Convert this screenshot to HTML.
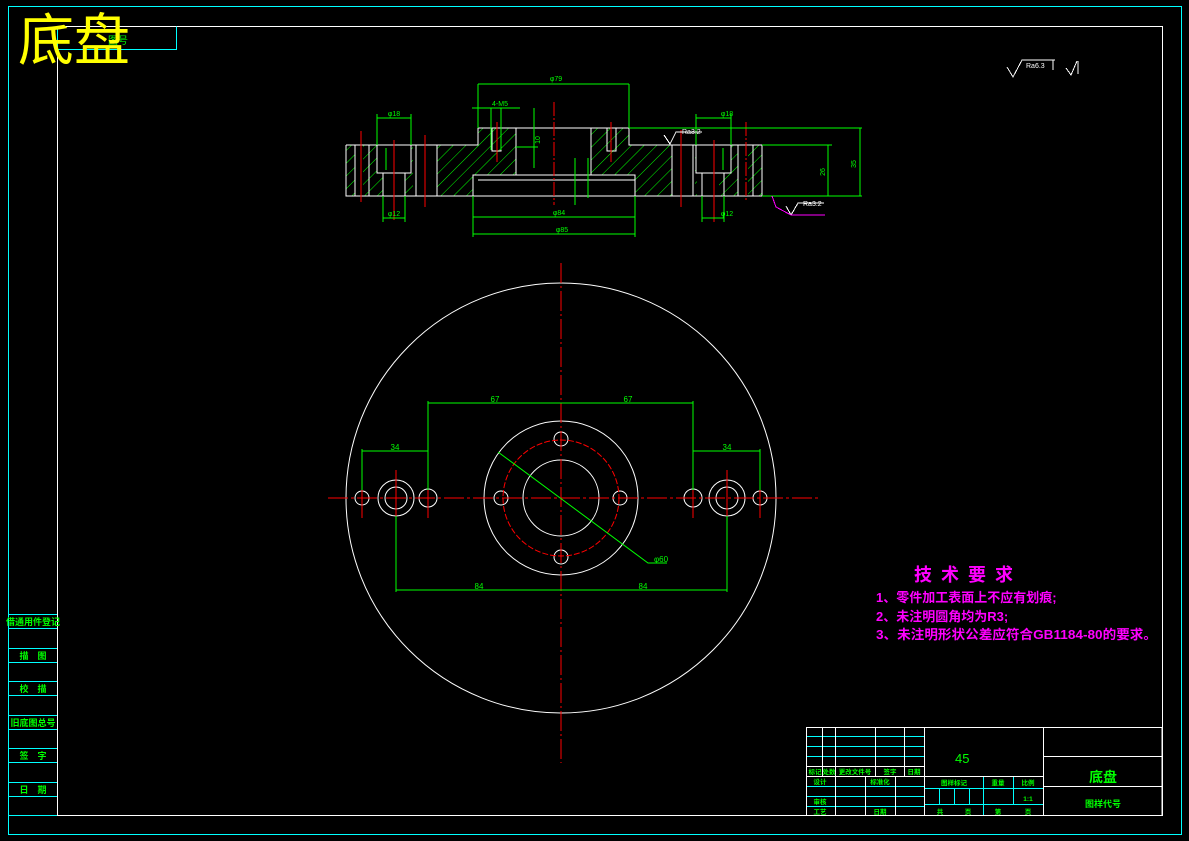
<!DOCTYPE html>
<html><head><meta charset="utf-8"><style>
html,body{margin:0;padding:0;background:#000;}
svg{display:block;}
text{font-family:"Liberation Sans","Noto Sans CJK SC",sans-serif;}
</style></head><body>
<svg width="1189" height="841" viewBox="0 0 1189 841" xmlns="http://www.w3.org/2000/svg" shape-rendering="crispEdges">
<defs>
<pattern id="h" patternUnits="userSpaceOnUse" width="9" height="9" patternTransform="rotate(45)">
<line x1="0" y1="0" x2="0" y2="9" stroke="#00ff00" stroke-width="1"/>
</pattern>
</defs>
<rect width="1189" height="841" fill="#000"/>
<rect x="8.5" y="6.5" width="1173" height="828" fill="none" stroke="#00ffff"/>
<rect x="57.5" y="26.5" width="1105" height="789" fill="none" stroke="#fff"/>
<polyline points="57.5,26.5 57.5,49.5 176.5,49.5 176.5,26.5" fill="none" stroke="#00ffff"/>
<text x="108" y="44" font-size="10" fill="#00ff00">图号</text>
<text x="18" y="60" font-size="56" fill="#ffff00" font-family="Noto Sans CJK SC,sans-serif">底盘</text>

<g stroke="#00ffff">
<line x1="8" y1="614.5" x2="57" y2="614.5"/><line x1="8" y1="628.5" x2="57" y2="628.5"/>
<line x1="8" y1="648.5" x2="57" y2="648.5"/><line x1="8" y1="662.5" x2="57" y2="662.5"/>
<line x1="8" y1="681.5" x2="57" y2="681.5"/><line x1="8" y1="695.5" x2="57" y2="695.5"/>
<line x1="8" y1="715.5" x2="57" y2="715.5"/><line x1="8" y1="729.5" x2="57" y2="729.5"/>
<line x1="8" y1="748.5" x2="57" y2="748.5"/><line x1="8" y1="762.5" x2="57" y2="762.5"/>
<line x1="8" y1="782.5" x2="57" y2="782.5"/><line x1="8" y1="796.5" x2="57" y2="796.5"/>
<line x1="8" y1="815.5" x2="57" y2="815.5"/>
</g>
<g fill="#00ff00" font-size="9" font-weight="bold" text-anchor="middle">
<text x="33" y="625">借通用件登记</text>
<text x="33" y="659">描　图</text>
<text x="33" y="692">校　描</text>
<text x="33" y="726">旧底图总号</text>
<text x="33" y="759">签　字</text>
<text x="33" y="793">日　期</text>
</g>

<g stroke="#fff" fill="none">
<polyline points="1007,67 1013,77 1022,60 1055,60"/><line x1="1053" y1="60" x2="1053" y2="70"/>
<polyline points="1066,68 1071,75 1077,61"/><line x1="1078" y1="61" x2="1078" y2="74"/>
</g>
<text x="1026" y="68" font-size="7" fill="#fff">Ra6.3</text>

<g>
<rect x="346" y="145" width="91" height="51" fill="url(#h)"/>
<rect x="437" y="128" width="79" height="68" fill="url(#h)"/>
<rect x="591" y="128" width="81" height="68" fill="url(#h)"/>
<rect x="672" y="145" width="90" height="51" fill="url(#h)"/>
<rect x="437" y="120" width="41" height="25" fill="#000"/>
<rect x="629" y="120" width="43" height="25" fill="#000"/>
<rect x="473" y="175" width="162" height="21" fill="#000"/>
<rect x="516" y="128" width="75" height="47" fill="#000"/>
<rect x="377" y="145" width="34" height="28" fill="#000"/>
<rect x="383" y="173" width="22" height="23" fill="#000"/>
<rect x="413" y="145" width="24" height="51" fill="#000"/>
<rect x="697" y="173" width="22" height="23" fill="#000"/>
<rect x="696" y="145" width="35" height="28" fill="#000"/>
<rect x="672" y="145" width="23" height="51" fill="#000"/>
<rect x="738" y="145" width="10" height="51" fill="#000"/>
<rect x="355" y="145" width="8" height="51" fill="#000"/>
</g>
<g stroke="#fff" fill="none">
<polyline points="346,145 478,145 478,128 629,128 629,145 762,145 762,196 346,196 346,145"/>
<rect x="473" y="175" width="162" height="21"/>
<line x1="478" y1="180" x2="635" y2="180"/>
<line x1="516" y1="128" x2="516" y2="175"/><line x1="591" y1="128" x2="591" y2="175"/>
<rect x="377" y="145" width="34" height="28"/><rect x="383" y="173" width="22" height="23"/>
<rect x="696" y="145" width="35" height="28"/><rect x="702" y="173" width="22" height="23"/>
<line x1="355" y1="145" x2="355" y2="196"/><line x1="369" y1="145" x2="369" y2="196"/>
<line x1="437" y1="145" x2="437" y2="196"/><line x1="416" y1="145" x2="416" y2="196"/>
<line x1="672" y1="145" x2="672" y2="196"/><line x1="693" y1="145" x2="693" y2="196"/>
<line x1="738" y1="145" x2="738" y2="196"/><line x1="753" y1="145" x2="753" y2="196"/>
<rect x="492" y="128" width="9" height="23"/><rect x="607" y="128" width="9" height="23"/>
</g>
<g stroke="#ff0000">
<line x1="361" y1="131" x2="361" y2="202"/><line x1="394" y1="140" x2="394" y2="220"/>
<line x1="425" y1="135" x2="425" y2="207"/><line x1="497" y1="122" x2="497" y2="162"/>
<line x1="554" y1="102" x2="554" y2="205" stroke-dasharray="14,2,2,2"/>
<line x1="611" y1="122" x2="611" y2="162"/><line x1="681" y1="130" x2="681" y2="207"/>
<line x1="714" y1="140" x2="714" y2="222"/><line x1="746" y1="122" x2="746" y2="200" stroke-dasharray="14,2,2,2"/>
</g>
<g stroke="#00ff00" fill="none">
<line x1="478" y1="84" x2="629" y2="84"/><line x1="478" y1="84" x2="478" y2="128"/><line x1="629" y1="84" x2="629" y2="128"/>
<line x1="472" y1="108" x2="520" y2="108"/><line x1="491" y1="108" x2="491" y2="150"/><line x1="501" y1="108" x2="501" y2="150"/>
<line x1="377" y1="118" x2="411" y2="118"/><line x1="377" y1="114" x2="377" y2="145"/><line x1="411" y1="114" x2="411" y2="145"/>
<line x1="383" y1="218" x2="405" y2="218"/><line x1="383" y1="196" x2="383" y2="222"/><line x1="405" y1="196" x2="405" y2="222"/>
<line x1="696" y1="118" x2="731" y2="118"/><line x1="696" y1="114" x2="696" y2="145"/><line x1="731" y1="114" x2="731" y2="145"/>
<line x1="702" y1="218" x2="724" y2="218"/><line x1="702" y1="196" x2="702" y2="222"/><line x1="724" y1="196" x2="724" y2="222"/>
<line x1="473" y1="217" x2="635" y2="217"/><line x1="473" y1="234" x2="635" y2="234"/>
<line x1="473" y1="196" x2="473" y2="237"/><line x1="635" y1="196" x2="635" y2="237"/>
<line x1="629" y1="128" x2="862" y2="128"/><line x1="762" y1="196" x2="862" y2="196"/><line x1="762" y1="145" x2="832" y2="145"/>
<line x1="860" y1="128" x2="860" y2="196"/><line x1="828" y1="145" x2="828" y2="196"/>
<line x1="534" y1="108" x2="534" y2="168"/><line x1="516" y1="147" x2="538" y2="147"/>
<line x1="575" y1="158" x2="575" y2="205"/><line x1="588" y1="158" x2="588" y2="198"/>
<line x1="386" y1="148" x2="386" y2="170"/><line x1="723" y1="148" x2="723" y2="170"/>
</g>
<g fill="#00ff00" font-size="7" text-anchor="middle">
<text x="556" y="81">φ79</text><text x="500" y="106">4-M5</text>
<text x="394" y="116">φ18</text><text x="394" y="216">φ12</text>
<text x="727" y="116">φ18</text><text x="727" y="216">φ12</text>
<text x="559" y="215">φ84</text><text x="562" y="232">φ85</text>
<text x="856" y="164" transform="rotate(-90 856 164)">35</text>
<text x="825" y="172" transform="rotate(-90 825 172)">26</text>
<text x="540" y="140" transform="rotate(-90 540 140)">10</text>
</g>
<g stroke="#fff" fill="none">
<polyline points="664,135 670,144 676,132 702,132"/><polyline points="786,206 791,215 798,203 824,203"/>
</g>
<polyline points="772,196 776,207 791,215" stroke="#ff00ff" fill="none"/>
<line x1="791" y1="215" x2="825" y2="215" stroke="#ff00ff"/>
<g fill="#fff" font-size="7"><text x="682" y="134">Ra3.2</text><text x="803" y="206">Ra3.2</text></g>

<g stroke="#fff" fill="none" shape-rendering="auto">
<circle cx="561" cy="498" r="215"/>
<circle cx="561" cy="498" r="77"/>
<circle cx="561" cy="498" r="38"/>
<circle cx="561" cy="439" r="7"/><circle cx="561" cy="557" r="7"/>
<circle cx="501" cy="498" r="7"/><circle cx="620" cy="498" r="7"/>
<circle cx="362" cy="498" r="7"/><circle cx="396" cy="498" r="18"/><circle cx="396" cy="498" r="11"/>
<circle cx="428" cy="498" r="9"/><circle cx="693" cy="498" r="9"/>
<circle cx="727" cy="498" r="18"/><circle cx="727" cy="498" r="11"/><circle cx="760" cy="498" r="7"/>
</g>
<circle cx="561" cy="498" r="58" stroke="#ff0000" fill="none" stroke-dasharray="6,2" shape-rendering="auto"/>
<g stroke="#ff0000">
<line x1="328" y1="498" x2="818" y2="498" stroke-dasharray="20,3,3,3"/>
<line x1="561" y1="263" x2="561" y2="763" stroke-dasharray="20,3,2,3"/>
<line x1="396" y1="470" x2="396" y2="526"/><line x1="727" y1="470" x2="727" y2="526"/>
<line x1="362" y1="478" x2="362" y2="518"/><line x1="760" y1="478" x2="760" y2="518"/>
<line x1="428" y1="478" x2="428" y2="518"/><line x1="693" y1="478" x2="693" y2="518"/>
</g>
<g stroke="#00ff00" fill="none">
<line x1="428" y1="403" x2="693" y2="403"/>
<line x1="428" y1="401" x2="428" y2="490"/><line x1="693" y1="401" x2="693" y2="490"/>
<line x1="362" y1="451" x2="428" y2="451"/><line x1="693" y1="451" x2="760" y2="451"/>
<line x1="362" y1="449" x2="362" y2="490"/><line x1="760" y1="449" x2="760" y2="490"/>
<line x1="396" y1="590" x2="727" y2="590"/>
<line x1="396" y1="516" x2="396" y2="592"/><line x1="727" y1="516" x2="727" y2="592"/>
<polyline points="498,452 648,563 667,563" shape-rendering="auto"/>
</g>
<g fill="#00ff00" font-size="8" text-anchor="middle">
<text x="495" y="402">67</text><text x="628" y="402">67</text>
<text x="395" y="450">34</text><text x="727" y="450">34</text>
<text x="479" y="589">84</text><text x="643" y="589">84</text>
<text x="661" y="562">φ60</text>
</g>

<g fill="#ff00ff" font-family="Noto Serif CJK SC,serif" font-weight="bold">
<text x="914" y="581" font-size="18" letter-spacing="9">技术要求</text>
<text x="876" y="602" font-size="13">1、零件加工表面上不应有划痕;</text>
<text x="876" y="621" font-size="13">2、未注明圆角均为R3;</text>
<text x="876" y="639" font-size="13" textLength="281" lengthAdjust="spacingAndGlyphs">3、未注明形状公差应符合GB1184-80的要求。</text>
</g>

<g stroke="#00ffff">
<line x1="806" y1="736.5" x2="924" y2="736.5"/><line x1="806" y1="746.5" x2="924" y2="746.5"/><line x1="806" y1="756.5" x2="924" y2="756.5"/>
<line x1="806" y1="786.5" x2="924" y2="786.5"/><line x1="806" y1="796.5" x2="924" y2="796.5"/><line x1="806" y1="806.5" x2="924" y2="806.5"/>
<line x1="924" y1="788.5" x2="1043" y2="788.5"/><line x1="924" y1="804.5" x2="1043" y2="804.5"/>
<line x1="983.5" y1="776" x2="983.5" y2="815"/><line x1="1013.5" y1="776" x2="1013.5" y2="804"/>
<line x1="939.5" y1="788" x2="939.5" y2="804"/><line x1="954.5" y1="788" x2="954.5" y2="804"/><line x1="969.5" y1="788" x2="969.5" y2="804"/>
</g>
<g stroke="#fff" fill="none">
<rect x="806.5" y="727.5" width="355.5" height="88"/>
<line x1="806" y1="766.5" x2="924" y2="766.5"/><line x1="806" y1="776.5" x2="1043" y2="776.5"/>
<line x1="822.5" y1="727" x2="822.5" y2="776"/><line x1="835.5" y1="727" x2="835.5" y2="815"/>
<line x1="875.5" y1="727" x2="875.5" y2="776"/><line x1="904.5" y1="727" x2="904.5" y2="776"/>
<line x1="865.5" y1="776" x2="865.5" y2="815"/><line x1="895.5" y1="776" x2="895.5" y2="815"/>
<line x1="924.5" y1="727" x2="924.5" y2="815"/><line x1="1043.5" y1="727" x2="1043.5" y2="815"/>
<line x1="1043" y1="756.5" x2="1162" y2="756.5"/><line x1="1043" y1="786.5" x2="1162" y2="786.5"/>
</g>
<g fill="#00ff00" font-size="6.5" font-weight="bold" text-anchor="middle">
<text x="815" y="774">标记</text><text x="829" y="774">处数</text><text x="855" y="774">更改文件号</text><text x="890" y="774">签字</text><text x="914" y="774">日期</text>
<text x="820" y="784">设计</text><text x="880" y="784">标准化</text>
<text x="820" y="804">审核</text><text x="820" y="814">工艺</text><text x="880" y="814">日期</text>
<text x="954" y="785">图样标记</text><text x="998" y="785">重量</text><text x="1028" y="785">比例</text>
<text x="1028" y="801">1:1</text>
<text x="940" y="814">共</text><text x="968" y="814">页</text><text x="998" y="814">第</text><text x="1028" y="814">页</text>
<text x="1103" y="807" font-size="9">图样代号</text>
</g>
<text x="955" y="763" font-size="13" fill="#00ff00">45</text>
<text x="1103" y="782" font-size="14" font-weight="bold" fill="#00ff00" text-anchor="middle" font-family="Noto Sans CJK SC,sans-serif">底盘</text>
</svg>
</body></html>
